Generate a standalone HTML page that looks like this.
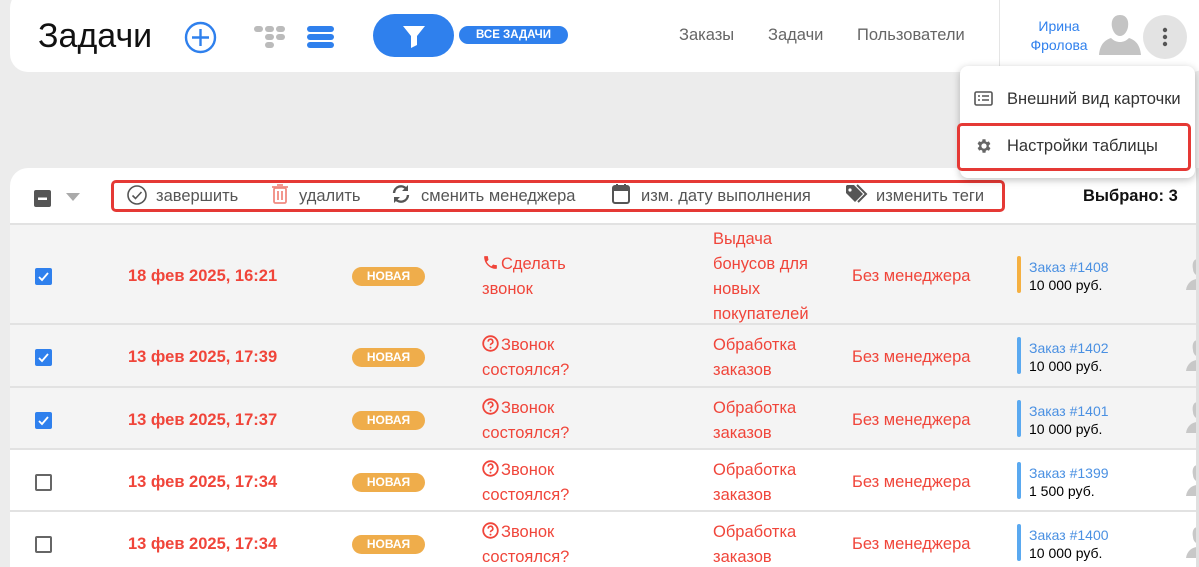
<!DOCTYPE html>
<html><head><meta charset="utf-8"><style>
*{margin:0;padding:0;box-sizing:border-box}
html,body{width:1199px;height:567px;overflow:hidden}
body{background:#ececec;font-family:"Liberation Sans",sans-serif;position:relative}
.a{position:absolute;white-space:nowrap}
.red{color:#f0453a}
.hdr{position:absolute;left:10px;top:-10px;width:1200px;height:82px;background:#fff;border-radius:18px}
.card{position:absolute;left:10px;top:168px;width:1186px;height:399px;background:#fff;border-radius:18px 0 0 0;overflow:hidden}
.row{position:absolute;left:0;width:1186px;border-top:2px solid #e2e2e2}
.cb{position:absolute;left:25px;width:17px;height:17px;border-radius:2px}
.cb.on{background:#2f80ed}
.cb.off{border:2px solid #666;background:#fff}
.badge{position:absolute;left:342px;width:73px;height:19px;border-radius:10px;background:#efad4b;color:#fff;font-size:12px;font-weight:bold;text-align:center;line-height:19px}
.t{font-size:16.5px;line-height:25px}
.bar{position:absolute;left:1007px;width:4px;height:37px;border-radius:2px}
.ord{position:absolute;left:1019px;font-size:14px;line-height:18px}
.tb{font-size:16.5px;color:#555}
.ic{display:inline-block;vertical-align:-2px;margin-right:2px}
</style></head><body>
<div class="hdr"></div>
<div class="a" style="left:38px;top:17px;font-size:34px;color:#111">Задачи</div>
<svg class="a" style="left:184px;top:21px" width="33" height="33"><circle cx="16.5" cy="16.5" r="14.5" fill="none" stroke="#2f80ed" stroke-width="2.4"/><path d="M16.5 8v17M8 16.5h17" stroke="#2f80ed" stroke-width="2.4"/></svg>
<svg class="a" style="left:254px;top:24px" width="38" height="28" fill="#bbb"><rect x="0" y="2" width="9" height="6" rx="3"/><rect x="11" y="2" width="9" height="6" rx="3"/><rect x="22" y="2" width="9" height="6" rx="3"/><rect x="11" y="10" width="9" height="6" rx="3"/><rect x="22" y="10" width="9" height="6" rx="3"/><rect x="11" y="18" width="9" height="6" rx="3"/></svg>
<svg class="a" style="left:307px;top:24px" width="28" height="26" fill="#2f80ed"><rect x="0" y="2" width="27" height="6" rx="3"/><rect x="0" y="10" width="27" height="6" rx="3"/><rect x="0" y="18" width="27" height="6" rx="3"/></svg>
<div class="a" style="left:373px;top:14px;width:81px;height:43px;border-radius:22px;background:#2f80ed"></div>
<svg class="a" style="left:402px;top:24px" width="24" height="24"><path d="M1 2h22l-8 10v9l-6 3v-12z" fill="#fff"/></svg>
<div class="a" style="left:459px;top:26px;width:109px;height:18px;border-radius:9px;background:#2f80ed;color:#fff;font-size:11.5px;font-weight:bold;text-align:center;line-height:18px">ВСЕ ЗАДАЧИ</div>
<div class="a" style="left:679px;top:26px;font-size:16.5px;color:#666">Заказы</div>
<div class="a" style="left:768px;top:26px;font-size:16.5px;color:#666">Задачи</div>
<div class="a" style="left:857px;top:26px;font-size:16.5px;color:#666">Пользователи</div>
<div class="a" style="left:999px;top:0;width:1px;height:72px;background:#e5e5e5"></div>
<div class="a" style="left:1026px;top:17px;font-size:14px;line-height:19px;color:#2f80ed;text-align:center;width:66px">Ирина<br>Фролова</div>
<svg class="a" style="left:1098px;top:14px" width="44" height="42" fill="#c4c4c4"><path d="M22 1c-7 0-9 6-8 12 1 5 4 9 8 9s7-4 8-9c1-6-1-12-8-12zM13 24c-6 2-11 6-12 17h42c-1-11-6-15-12-17-3 3-6 4-9 4s-6-1-9-4z"/></svg>
<div class="a" style="left:1143px;top:15px;width:44px;height:44px;border-radius:50%;background:#e3e3e3"></div>
<svg class="a" style="left:1161px;top:26px" width="8" height="22" fill="#555"><circle cx="4" cy="4" r="2.2"/><circle cx="4" cy="11" r="2.2"/><circle cx="4" cy="18" r="2.2"/></svg>

<div class="card">
<svg class="a" style="left:24px;top:22px" width="18" height="18"><rect width="17" height="17" rx="2" fill="#555"/><rect x="4" y="7.5" width="9" height="2.5" fill="#fff"/></svg>
<svg class="a" style="left:56px;top:25px" width="14" height="9"><path d="M0 0h14l-7 8z" fill="#aaa"/></svg>
<div class="a" style="left:101px;top:12px;width:894px;height:32px;border:3px solid #e53935;border-radius:5px"></div>
<svg class="a" style="left:116px;top:16px" width="22" height="22"><circle cx="11" cy="11" r="9" fill="none" stroke="#555" stroke-width="1.6"/><path d="M6.5 11.5l3 3 6-6.5" fill="none" stroke="#555" stroke-width="1.6"/></svg>
<div class="a tb" style="left:146px;top:19px">завершить</div>
<svg class="a" style="left:261px;top:15px" width="18" height="22"><rect x="3" y="5" width="12" height="15" rx="1.5" fill="none" stroke="#f08a80" stroke-width="1.8"/><path d="M1 4h16M6 2h6M7 8v9M11 8v9" stroke="#f08a80" stroke-width="1.8"/></svg>
<div class="a tb" style="left:289px;top:19px">удалить</div>
<svg class="a" style="left:381px;top:16px" width="20" height="20"><path d="M3 9a7 7 0 0 1 12.5-4M17 11a7 7 0 0 1-12.5 4" fill="none" stroke="#555" stroke-width="2.4"/><path d="M17 1v6h-6zM3 19v-6h6z" fill="#555"/></svg>
<div class="a tb" style="left:411px;top:19px">сменить менеджера</div>
<svg class="a" style="left:602px;top:15px" width="18" height="22"><rect x="1" y="3" width="16" height="17" rx="2" fill="none" stroke="#555" stroke-width="2"/><rect x="1" y="3" width="16" height="5" fill="#555"/><path d="M5 1v4M13 1v4" stroke="#555" stroke-width="2"/></svg>
<div class="a tb" style="left:631px;top:19px">изм. дату выполнения</div>
<svg class="a" style="left:835px;top:16px" width="24" height="20"><path d="M1 2v7l9 9 8-8-9-9H2z" fill="#555"/><circle cx="5" cy="6" r="1.6" fill="#fff"/><path d="M12 1l9 9-8 8" fill="none" stroke="#555" stroke-width="2"/></svg>
<div class="a tb" style="left:866px;top:19px">изменить теги</div>
<div class="a" style="left:1073px;top:19px;font-size:16.5px;color:#111;font-weight:bold">Выбрано: 3</div>

<div class="row" style="top:55px;height:102px;background:#f4f4f4">
<div class="cb on" style="top:43px"><svg width="17" height="17"><path d="M4 9l3 3 6-7" fill="none" stroke="#fff" stroke-width="1.8"/></svg></div>
<div class="a red" style="left:118px;top:42px;font-size:16.5px;font-weight:bold">18 фев 2025, 16:21</div>
<div class="badge" style="top:42px">НОВАЯ</div>
<div class="a red t" style="left:472px;top:27px"><svg class="ic" width="17" height="17" viewBox="0 0 24 24"><path fill="#f0453a" d="M6.6 10.8a15 15 0 0 0 6.6 6.6l2.2-2.2c.3-.3.7-.4 1-.2 1.1.4 2.3.6 3.6.6.6 0 1 .4 1 1V20c0 .6-.4 1-1 1A17 17 0 0 1 3 4c0-.6.4-1 1-1h3.5c.6 0 1 .4 1 1 0 1.3.2 2.5.6 3.6.1.3 0 .7-.2 1z"/></svg>Сделать<br>звонок</div>
<div class="a red t" style="left:703px;top:2px">Выдача<br>бонусов для<br>новых<br>покупателей</div>
<div class="a red t" style="left:842px;top:39px">Без менеджера</div>
<div class="bar" style="top:31px;background:#f5b041"></div>
<div class="ord" style="top:33px"><span style="color:#4a90e2">Заказ #1408</span><br>10 000 руб.</div>
</div>

<div class="row" style="top:155px;height:64px;background:#f4f4f4">
<div class="cb on" style="top:24px"><svg width="17" height="17"><path d="M4 9l3 3 6-7" fill="none" stroke="#fff" stroke-width="1.8"/></svg></div>
<div class="a red" style="left:118px;top:23px;font-size:16.5px;font-weight:bold">13 фев 2025, 17:39</div>
<div class="badge" style="top:23px">НОВАЯ</div>
<div class="a red t" style="left:472px;top:8px"><svg class="ic" width="17" height="17"><circle cx="8.5" cy="8.5" r="7.3" fill="none" stroke="#f0453a" stroke-width="1.8"/><path d="M6.2 6.6a2.3 2.3 0 1 1 3.3 2c-.7.4-1 .8-1 1.6" fill="none" stroke="#f0453a" stroke-width="1.6"/><circle cx="8.5" cy="12.6" r="1" fill="#f0453a"/></svg>Звонок<br>состоялся?</div>
<div class="a red t" style="left:703px;top:8px">Обработка<br>заказов</div>
<div class="a red t" style="left:842px;top:20px">Без менеджера</div>
<div class="bar" style="top:12px;background:#5aa9f0"></div>
<div class="ord" style="top:14px"><span style="color:#4a90e2">Заказ #1402</span><br>10 000 руб.</div>
</div>

<div class="row" style="top:218px;height:64px;background:#f4f4f4">
<div class="cb on" style="top:24px"><svg width="17" height="17"><path d="M4 9l3 3 6-7" fill="none" stroke="#fff" stroke-width="1.8"/></svg></div>
<div class="a red" style="left:118px;top:23px;font-size:16.5px;font-weight:bold">13 фев 2025, 17:37</div>
<div class="badge" style="top:23px">НОВАЯ</div>
<div class="a red t" style="left:472px;top:8px"><svg class="ic" width="17" height="17"><circle cx="8.5" cy="8.5" r="7.3" fill="none" stroke="#f0453a" stroke-width="1.8"/><path d="M6.2 6.6a2.3 2.3 0 1 1 3.3 2c-.7.4-1 .8-1 1.6" fill="none" stroke="#f0453a" stroke-width="1.6"/><circle cx="8.5" cy="12.6" r="1" fill="#f0453a"/></svg>Звонок<br>состоялся?</div>
<div class="a red t" style="left:703px;top:8px">Обработка<br>заказов</div>
<div class="a red t" style="left:842px;top:20px">Без менеджера</div>
<div class="bar" style="top:12px;background:#5aa9f0"></div>
<div class="ord" style="top:14px"><span style="color:#4a90e2">Заказ #1401</span><br>10 000 руб.</div>
</div>

<div class="row" style="top:280px;height:64px;background:#fff">
<div class="cb off" style="top:24px"></div>
<div class="a red" style="left:118px;top:23px;font-size:16.5px;font-weight:bold">13 фев 2025, 17:34</div>
<div class="badge" style="top:23px">НОВАЯ</div>
<div class="a red t" style="left:472px;top:8px"><svg class="ic" width="17" height="17"><circle cx="8.5" cy="8.5" r="7.3" fill="none" stroke="#f0453a" stroke-width="1.8"/><path d="M6.2 6.6a2.3 2.3 0 1 1 3.3 2c-.7.4-1 .8-1 1.6" fill="none" stroke="#f0453a" stroke-width="1.6"/><circle cx="8.5" cy="12.6" r="1" fill="#f0453a"/></svg>Звонок<br>состоялся?</div>
<div class="a red t" style="left:703px;top:8px">Обработка<br>заказов</div>
<div class="a red t" style="left:842px;top:20px">Без менеджера</div>
<div class="bar" style="top:12px;background:#5aa9f0"></div>
<div class="ord" style="top:14px"><span style="color:#4a90e2">Заказ #1399</span><br>1 500 руб.</div>
</div>

<div class="row" style="top:342px;height:80px;background:#fff">
<div class="cb off" style="top:24px"></div>
<div class="a red" style="left:118px;top:23px;font-size:16.5px;font-weight:bold">13 фев 2025, 17:34</div>
<div class="badge" style="top:23px">НОВАЯ</div>
<div class="a red t" style="left:472px;top:8px"><svg class="ic" width="17" height="17"><circle cx="8.5" cy="8.5" r="7.3" fill="none" stroke="#f0453a" stroke-width="1.8"/><path d="M6.2 6.6a2.3 2.3 0 1 1 3.3 2c-.7.4-1 .8-1 1.6" fill="none" stroke="#f0453a" stroke-width="1.6"/><circle cx="8.5" cy="12.6" r="1" fill="#f0453a"/></svg>Звонок<br>состоялся?</div>
<div class="a red t" style="left:703px;top:8px">Обработка<br>заказов</div>
<div class="a red t" style="left:842px;top:20px">Без менеджера</div>
<div class="bar" style="top:12px;background:#5aa9f0"></div>
<div class="ord" style="top:14px"><span style="color:#4a90e2">Заказ #1400</span><br>10 000 руб.</div>
</div>
</div>
<svg class="a" style="left:1184px;top:255px" width="14" height="312" fill="#c8c8c8"><path d="M14 4c-5 0-6 5-5 10 0 3 2 6 5 7zM14 24c-6 0-11 4-12 11h12z"/><g transform="translate(0,81)"><path d="M14 4c-5 0-6 5-5 10 0 3 2 6 5 7zM14 24c-6 0-11 4-12 11h12z"/></g><g transform="translate(0,143)"><path d="M14 4c-5 0-6 5-5 10 0 3 2 6 5 7zM14 24c-6 0-11 4-12 11h12z"/></g><g transform="translate(0,206)"><path d="M14 4c-5 0-6 5-5 10 0 3 2 6 5 7zM14 24c-6 0-11 4-12 11h12z"/></g><g transform="translate(0,268)"><path d="M14 4c-5 0-6 5-5 10 0 3 2 6 5 7zM14 24c-6 0-11 4-12 11h12z"/></g></svg>
<div class="a" style="left:1196px;top:168px;width:3px;height:399px;background:#e0e0e0"></div>

<div class="a" style="left:960px;top:66px;width:235px;height:112px;background:#fff;border-radius:8px;box-shadow:0 2px 8px rgba(0,0,0,.25)"></div>
<svg class="a" style="left:974px;top:91px" width="20" height="16"><rect x="1" y="1" width="17" height="13" rx="1.5" fill="none" stroke="#555" stroke-width="1.6"/><path d="M4 5h2M8 5h7M4 9h2M8 9h7" stroke="#555" stroke-width="1.6"/></svg>
<div class="a" style="left:1007px;top:90px;font-size:16.5px;color:#333">Внешний вид карточки</div>
<div class="a" style="left:957px;top:123px;width:234px;height:48px;border:3px solid #e53935;border-radius:5px"></div>
<svg class="a" style="left:975px;top:137px" width="18" height="18" viewBox="0 0 24 24"><path fill="#666" d="M19.4 13a7.5 7.5 0 0 0 0-2l2.1-1.6-2-3.5-2.5 1a7 7 0 0 0-1.7-1L15 3h-4l-.4 2.7a7 7 0 0 0-1.7 1l-2.5-1-2 3.5L6.6 11a7.5 7.5 0 0 0 0 2l-2.1 1.6 2 3.5 2.5-1a7 7 0 0 0 1.7 1L11 21h4l.4-2.7a7 7 0 0 0 1.7-1l2.5 1 2-3.5zM13 15.5a3.5 3.5 0 1 1 0-7 3.5 3.5 0 0 1 0 7z" transform="translate(-1 0)"/></svg>
<div class="a" style="left:1007px;top:137px;font-size:16.5px;color:#333">Настройки таблицы</div>
</body></html>
